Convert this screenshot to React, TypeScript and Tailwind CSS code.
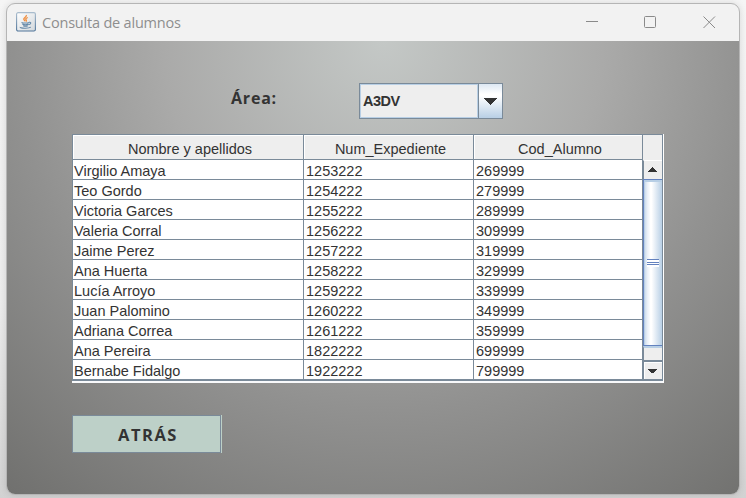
import React from "react";

const rows: [string, string, string][] = [
  ["Virgilio Amaya", "1253222", "269999"],
  ["Teo Gordo", "1254222", "279999"],
  ["Victoria Garces", "1255222", "289999"],
  ["Valeria Corral", "1256222", "309999"],
  ["Jaime Perez", "1257222", "319999"],
  ["Ana Huerta", "1258222", "329999"],
  ["Lucía Arroyo", "1259222", "339999"],
  ["Juan Palomino", "1260222", "349999"],
  ["Adriana Correa", "1261222", "359999"],
  ["Ana Pereira", "1822222", "699999"],
  ["Bernabe Fidalgo", "1922222", "799999"],
];

function JavaIcon() {
  return (
    <svg width="20" height="20" viewBox="0 0 20 20" className="mb-[2px] block shrink-0">
      <defs>
        <linearGradient id="tile" x1="0" y1="0" x2="1" y2="1">
          <stop offset="0" stopColor="#ffffff" />
          <stop offset="1" stopColor="#d3d8dc" />
        </linearGradient>
        <linearGradient id="edge" x1="0" y1="0" x2="0" y2="1">
          <stop offset="0" stopColor="#a9bccd" />
          <stop offset="1" stopColor="#50759a" />
        </linearGradient>
      </defs>
      <rect x="0.6" y="0.6" width="18.8" height="18.4" rx="1.5" fill="url(#tile)" stroke="url(#edge)" strokeWidth="1.1" />
      <path d="M10.300 3c.8 2-3 2.800-2.500 4.300.2.700 1 1.300 1.200 1.900M11.800 5.500c-2.400 1-2.300 1.700-1.600 2.600.4.500.2 1-.3 1.400" fill="none" stroke="#f08c3c" strokeWidth="1.300" />
      <path d="M5.500 10.400c1.500.8 6 .8 7.500 0M6.300 12c1.500.8 4.600.8 6.200 0M7.200 13.700c1.500.6 3.200.6 4.600 0M13 10.300c2.600-.6 2.200 2-.5 2.400M4.200 15c-.6 1.500 8.800 1.700 10.600.2" fill="none" stroke="#6488a8" strokeWidth="1.100" />
    </svg>
  );
}

function Arrow({ up }: { up?: boolean }) {
  return (
    <svg width="12" height="6" viewBox="0 0 12 6" shapeRendering="crispEdges" className="mr-px block">
      <path d={up ? "M0.500 5H10.500L5.500 0Z" : "M0 0.500H11L5.500 5.500Z"} fill="#333" />
    </svg>
  );
}

function HeaderCell({ children }: { children: React.ReactNode }) {
  return (
    <div className="h-[25px] border-r border-b border-[#7a8a99] bg-[#eee] pt-[6px] pl-[4px] text-center leading-[17px] shadow-[inset_1px_1px_0_#fff]">
      {children}
    </div>
  );
}

export default function App() {
  return (
    <div className="h-[498px] w-[746px] overflow-hidden bg-[linear-gradient(#f5f5f5,#ececec_60%,#d2d2d2)] pt-[3px] pl-[6px] font-['Liberation_Sans',sans-serif] text-[#333]">
      <div className="flex h-[492px] w-[734px] flex-col overflow-hidden rounded-[9px] border border-[#b5b5b5] bg-[#f2f2f2] shadow-[0_0_7px_rgba(0,0,0,0.12)]">
        <header className="flex h-[37px] shrink-0 items-center pl-[9px]">
          <JavaIcon />
          <span className="ml-[6px] font-['Open_Sans',sans-serif] text-[14.5px] leading-5 tracking-[-0.2px] text-[#8e8e8e]">Consulta de alumnos</span>
          <svg width="130" height="14" viewBox="0 0 130 14" fill="none" stroke="#8a8a8a" className="mr-[23px] mb-[2px] ml-auto block">
            <path d="M0 6.500H12" />
            <rect x="58.500" y="1.500" width="11" height="11" rx="1" />
            <path d="M117.500 1.500L129 13M129 1.500L117.500 13" />
          </svg>
        </header>
        <main className="flex grow flex-col items-start bg-[radial-gradient(circle_at_376px_0px,#c4c8c6_0px,#aaaaa9_220px,#919190_370px,#70706e_590px)] pl-[65px]">
          <div className="mt-[42px] flex h-[36px] items-start">
            <span className="ml-[159px] w-[128px] pt-[4px] font-['Open_Sans',sans-serif] text-[16px] leading-[22px] font-bold tracking-[0.8px]">Área:</span>
            <div className="flex h-[36px] w-[144px] border border-[#7a8a99]">
              <div className="flex w-[118px] items-center border border-[#b8cfe5] bg-[#eee] pt-[2px] pl-[2px] text-[14.5px] font-bold tracking-[-0.5px]">A3DV</div>
              <div className="flex w-[24px] items-center justify-center border-l border-[#7a8a99] bg-[linear-gradient(#dde8f3,#fff_30%,#fff_35%,#b8cfe5)] pr-px">
                <svg width="14" height="7" viewBox="0 0 14 7" shapeRendering="crispEdges" className="shrink-0">
                  <path d="M0 0H14L7 7Z" fill="#333" />
                </svg>
              </div>
            </div>
          </div>

          <div className="mt-[15px] flex h-[249px] w-[592px] border-r border-b-2 border-white border-b-[#f8f9fb] text-[14.5px]">
            <div className="flex h-[247px] w-[591px] border-t border-r border-b-2 border-l border-[#7a8a99] bg-white">
              <div className="w-[570px] shrink-0">
                <div className="grid grid-cols-[231px_170px_169px]">
                  <HeaderCell>Nombre y apellidos</HeaderCell>
                  <HeaderCell>Num_Expediente</HeaderCell>
                  <HeaderCell>Cod_Alumno</HeaderCell>
                </div>
                {rows.map((row, i) => (
                  <div key={row[1]} className="grid h-[20px] grid-cols-[231px_170px_169px]">
                    {row.map((cell, j) => (
                      <div
                        key={j}
                        className={`h-[20px] border-r border-[#7a8a99] pt-[3px] leading-[16px] whitespace-nowrap ${j ? "pl-[2px]" : "pl-[1px]"} ${i < 10 ? "border-b" : ""}`}
                      >
                        {cell}
                      </div>
                    ))}
                  </div>
                ))}
              </div>
              <div className="flex grow flex-col">
                <div className="h-[25px] bg-[#eee]" />
                <div className="flex h-[19px] items-center justify-center border-t border-l border-t-white border-l-[#7a8a99] bg-[#eee]">
                  <Arrow up />
                </div>
                <div className="flex h-[167px] items-center justify-center border-y border-l border-[#6382bf] bg-[linear-gradient(90deg,#c3d6ea,#e8eff7_18%,#fff_36%,#fff_42%,#b8cfe5)] shadow-[inset_1px_2px_0_#b8cfe5]">
                  <div className="flex flex-col pt-px">
                    <div className="h-[3px] w-[12px] border-t border-[#6382bf] bg-white" />
                    <div className="h-[2px] w-[12px] border-t border-[#6382bf] bg-white" />
                    <div className="h-[3px] w-[12px] border-t border-[#6382bf] bg-white" />
                  </div>
                </div>
                <div className="h-[14px] border-t-2 border-l border-t-[#b8cfe5] border-l-[#7a8a99] bg-[#eee]" />
                <div className="flex grow items-center justify-center border-t-2 border-l border-[#7a8a99] bg-[#eee] shadow-[inset_1px_1px_0_#fff]">
                  <Arrow />
                </div>
              </div>
            </div>
          </div>

          <div className="mt-[32px] flex h-[38px] w-[150px] border-r border-[#bdd0c8]">
            <button className="h-[38px] w-[149px] border border-[#7a8a99] bg-[#bdd0c8] pt-[3px] pl-[3px] font-['Open_Sans',sans-serif] text-[16.5px] font-bold tracking-[1.5px]">ATRÁS</button>
          </div>
        </main>
      </div>
    </div>
  );
}
